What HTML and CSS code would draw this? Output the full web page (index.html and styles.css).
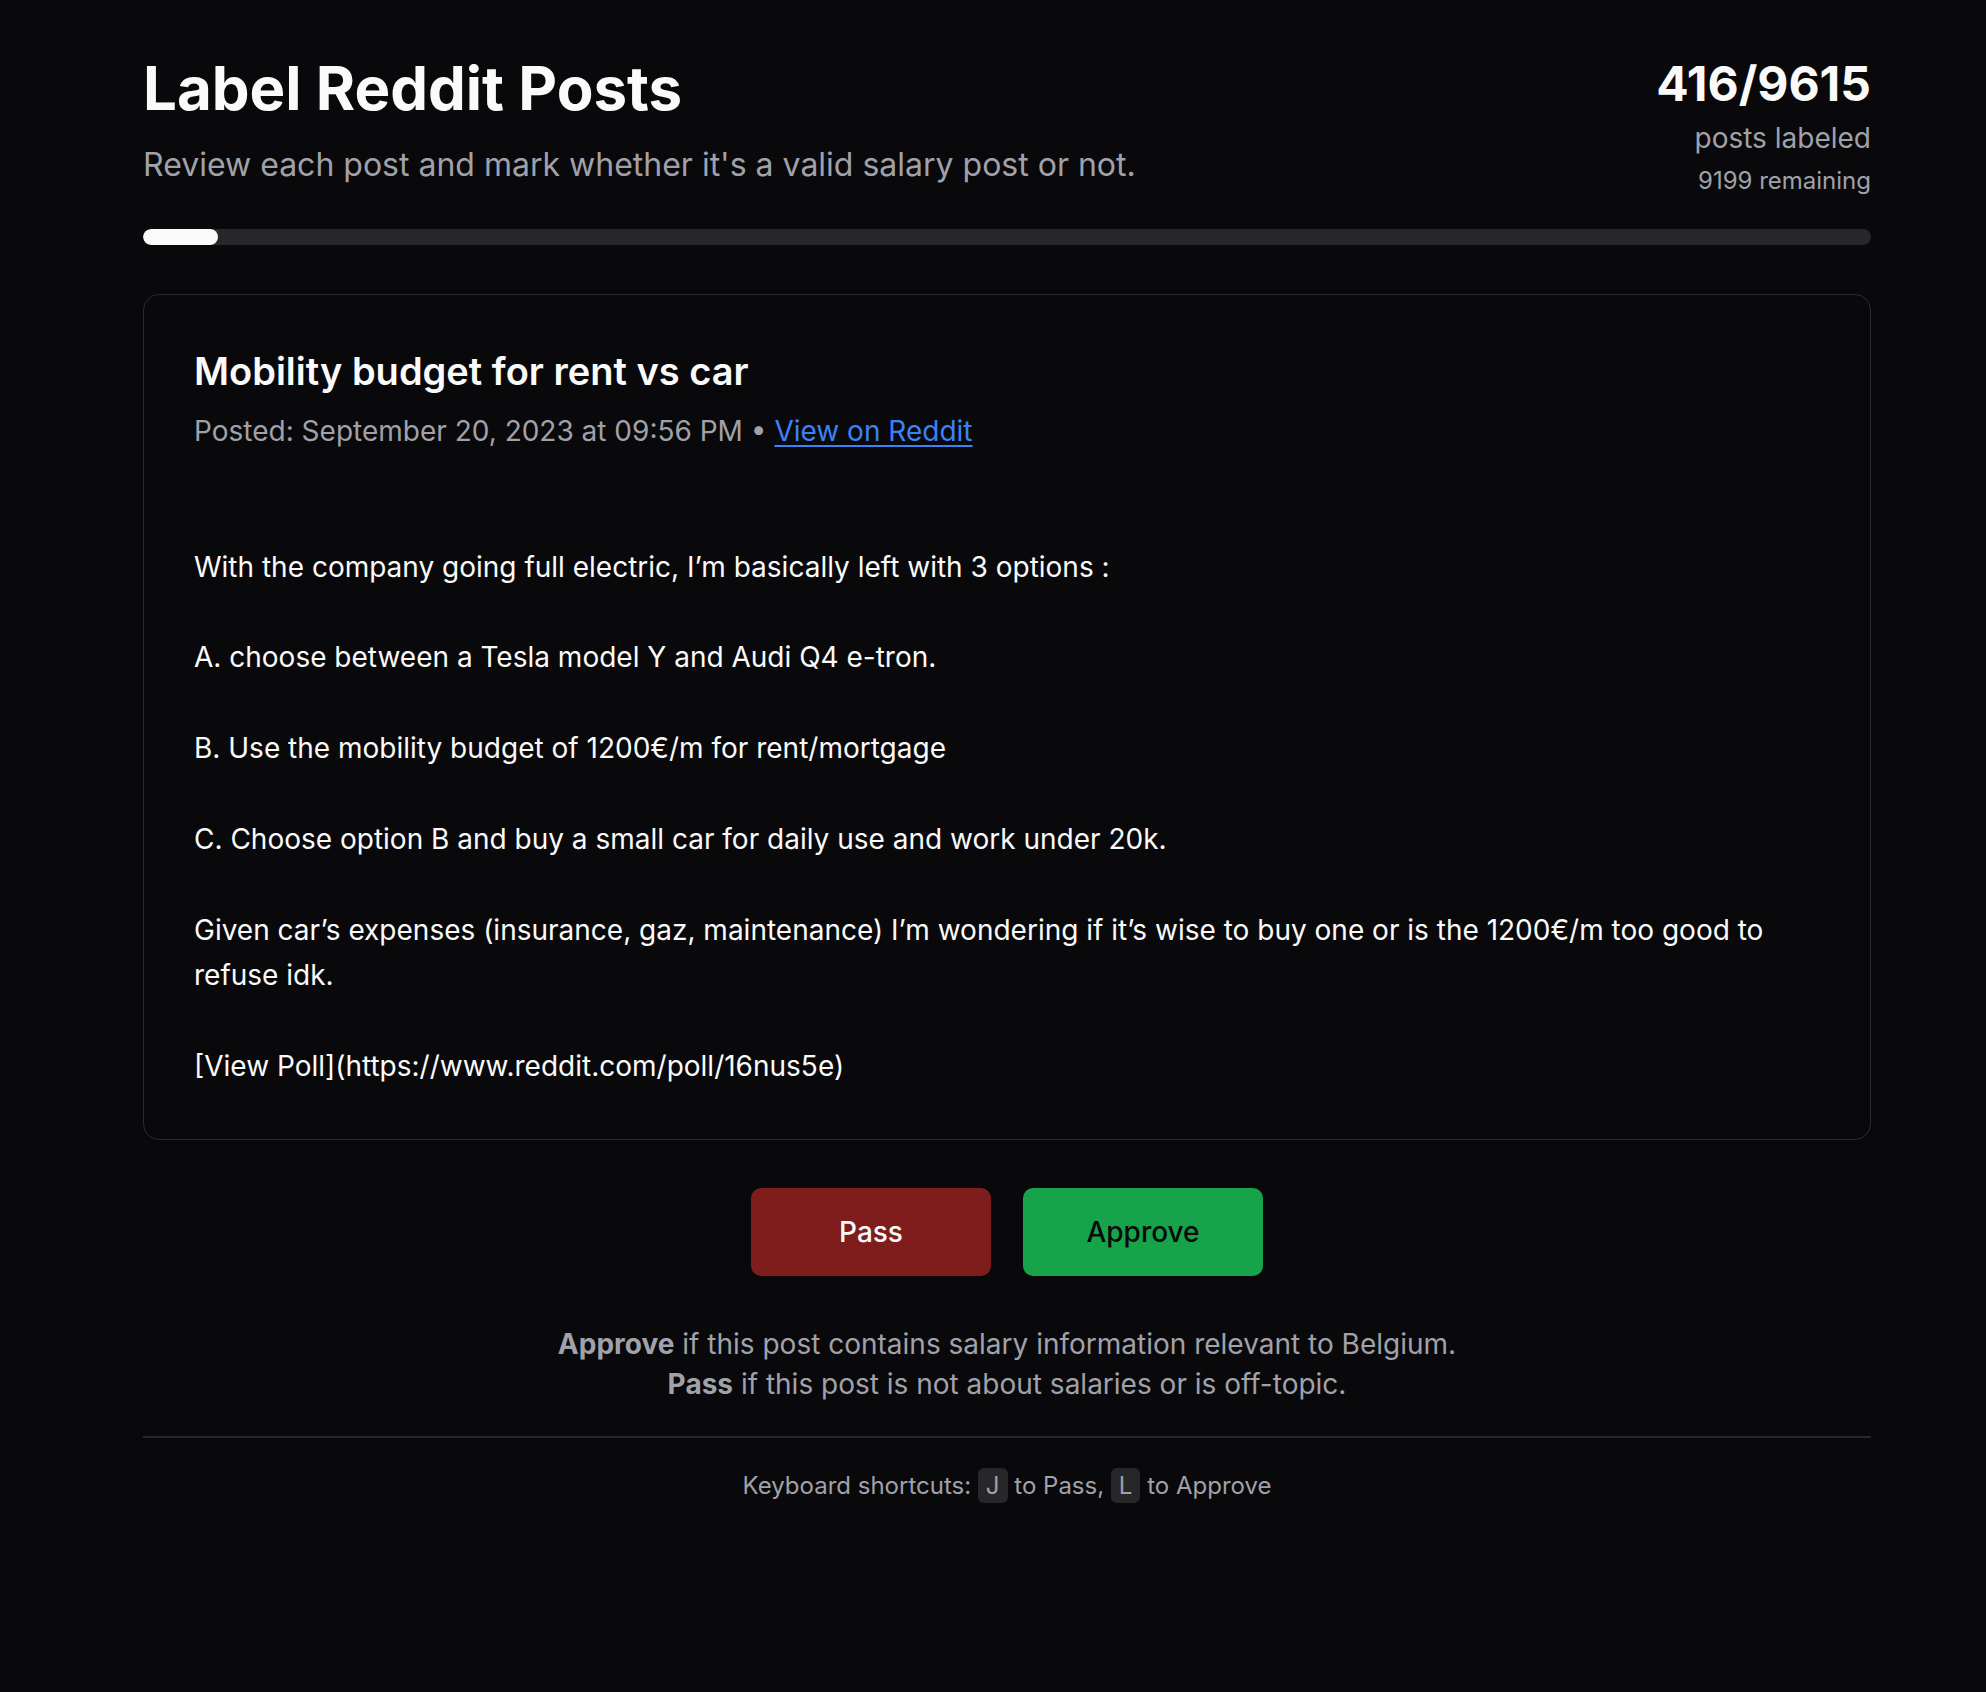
FILE: index.html
```html
<!DOCTYPE html>
<html lang="en">
<head>
<meta charset="utf-8">
<title>Label Reddit Posts</title>
<link rel="stylesheet" href="styles.css">
</head>
<body>
<main class="page">
  <header class="header">
    <div class="intro">
      <h1 class="title">Label Reddit Posts</h1>
      <p class="subtitle">Review each post and mark whether it's a valid salary post or not.</p>
    </div>
    <div class="stats">
      <div class="count">416/9615</div>
      <div class="count-label">posts labeled</div>
      <div class="remaining">9199 remaining</div>
    </div>
  </header>

  <div class="progress"><div class="progress-fill" style="width: 4.33%"></div></div>

  <article class="card">
    <h2 class="post-title">Mobility budget for rent vs car</h2>
    <p class="meta">Posted: September 20, 2023 at 09:56 PM • <a class="reddit-link" href="#">View on Reddit</a></p>
    <div class="post-body">With the company going full electric, I’m basically left with 3 options :

A. choose between a Tesla model Y and Audi Q4 e-tron.

B. Use the mobility budget of 1200€/m for rent/mortgage

C. Choose option B and buy a small car for daily use and work under 20k.

Given car’s expenses (insurance, gaz, maintenance) I’m wondering if it’s wise to buy one or is the 1200€/m too good to refuse idk.

[View Poll](https://www.reddit.com/poll/16nus5e)</div>
  </article>

  <div class="actions">
    <button class="btn btn-pass" type="button">Pass</button>
    <button class="btn btn-approve" type="button">Approve</button>
  </div>

  <div class="instructions">
    <p><strong>Approve</strong> if this post contains salary information relevant to Belgium.</p>
    <p><strong>Pass</strong> if this post is not about salaries or is off-topic.</p>
  </div>

  <footer class="footer">
    Keyboard shortcuts: <kbd class="key">J</kbd> to Pass, <kbd class="key">L</kbd> to Approve
  </footer>
</main>
</body>
</html>
```

FILE: styles.css
```css
html, body {
  margin: 0;
  padding: 0;
  background: #09090b;
}

body {
  font-family: Inter, "Noto Sans", "Liberation Sans", sans-serif;
  color: #fafafa;
  min-height: 1692px;
}

.page {
  padding: 58px 115px 0 143px;
}

.header {
  display: flex;
  justify-content: space-between;
  align-items: flex-start;
}

.title {
  margin: 0;
  font-size: 60px;
  line-height: 60px;
  font-weight: 700;
  color: #fafafa;
}

.subtitle {
  margin: 26.5px 0 0;
  font-size: 32px;
  line-height: 40px;
  color: #a1a1aa;
}

.stats {
  text-align: right;
}

.count {
  font-size: 48px;
  line-height: 52px;
  font-weight: 700;
  color: #fafafa;
}

.count-label {
  margin-top: 9.5px;
  font-size: 28px;
  line-height: 36px;
  color: #a1a1aa;
}

.remaining {
  margin-top: 9px;
  font-size: 24px;
  line-height: 32px;
  color: #a1a1aa;
}

.progress {
  margin-top: 32px;
  height: 16px;
  border-radius: 8px;
  background: #27272a;
  overflow: hidden;
}

.progress-fill {
  height: 100%;
  border-radius: 8px;
  background: #fafafa;
}

.card {
  margin-top: 49px;
  border: 1px solid #2c2c30;
  border-radius: 16px;
  padding: 50px;
}

.post-title {
  margin: 0;
  font-size: 38px;
  line-height: 52px;
  font-weight: 600;
  color: #fafafa;
}

.meta {
  margin: 14px 0 0;
  font-size: 28px;
  line-height: 40px;
  color: #a1a1aa;
}

.reddit-link {
  color: #3b82f6;
  text-decoration: underline;
  text-underline-offset: 4px;
}

.post-body {
  margin-top: 94px;
  font-size: 28px;
  line-height: 45.4px;
  white-space: pre-wrap;
  color: #fafafa;
}

.actions {
  margin-top: 48px;
  display: flex;
  justify-content: center;
  gap: 32px;
}

.btn {
  min-width: 240px;
  height: 88px;
  padding: 0 60px;
  border: none;
  border-radius: 10px;
  font-family: inherit;
  font-size: 28px;
  font-weight: 500;
  cursor: pointer;
}

.btn-pass {
  background: #7f1d1d;
  color: #fafafa;
}

.btn-approve {
  background: #16a34a;
  color: #0a0a0a;
}

.instructions {
  margin-top: 48px;
  padding-bottom: 32px;
  border-bottom: 2px solid #27272a;
  text-align: center;
  font-size: 28px;
  line-height: 40px;
  color: #a1a1aa;
}

.instructions p {
  margin: 0;
}

.instructions strong {
  font-weight: 700;
}

.footer {
  padding-top: 30px;
  text-align: center;
  font-size: 24px;
  line-height: 35px;
  color: #a1a1aa;
}

.key {
  display: inline-block;
  padding: 0 8px;
  border-radius: 6px;
  background: #27272a;
  font-family: inherit;
  font-size: 24px;
  line-height: 35px;
  color: #a1a1aa;
  vertical-align: top;
}
```
